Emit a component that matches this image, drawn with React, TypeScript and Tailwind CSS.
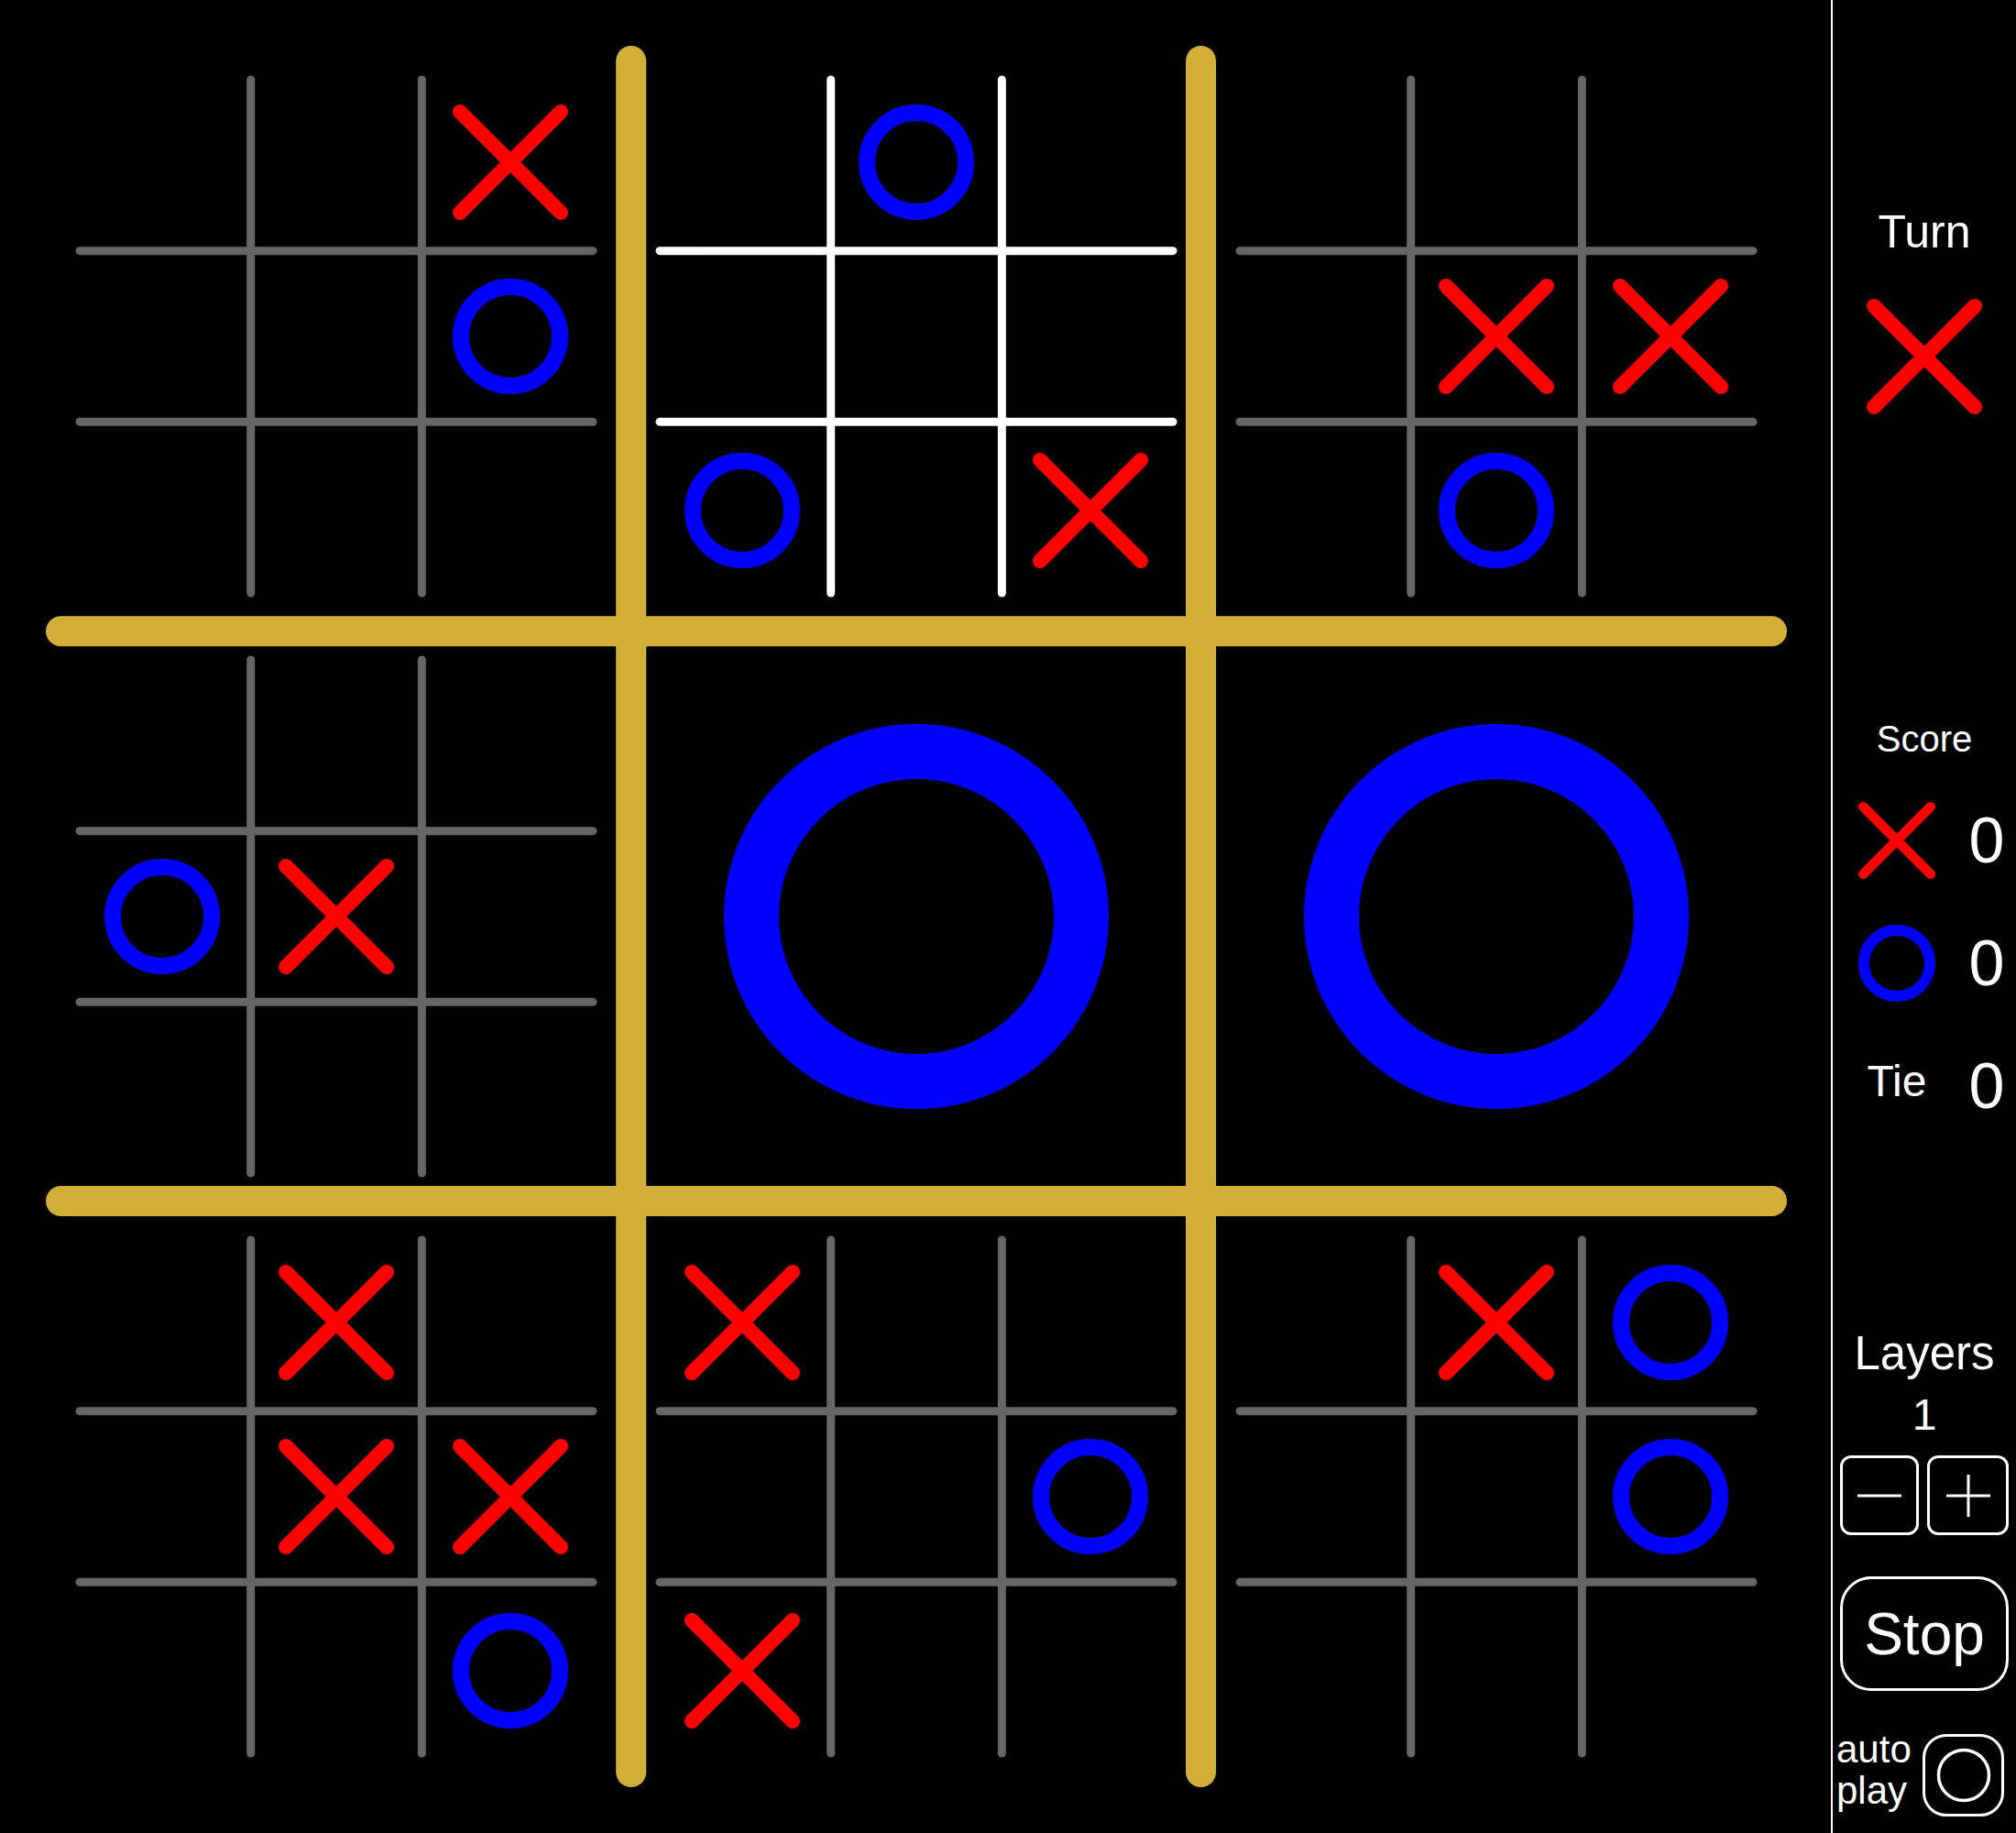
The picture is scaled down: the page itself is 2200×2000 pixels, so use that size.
import React from 'react'

type Cell = 'X' | 'O' | '.'

const CENTERS = [367, 1000, 1633]
const GOLD_LINES = [688.7, 1310.5]
const GOLD = '#d4af37'
const RED = '#ff0000'
const BLUE = '#0000ff'

// each sub board: either 9 cells row by row, or a won board
const boards: { cells?: string; winner?: Cell }[] = [
  { cells: '..X..O...' },
  { cells: '.O....O.X' },
  { cells: '....XX.O.' },
  { cells: '...OX....' },
  { winner: 'O' },
  { winner: 'O' },
  { cells: '.X..XX..O' },
  { cells: 'X....OX..' },
  { cells: '.XO..O...' },
]
const activeBoard = 1

const XMark = ({ x, y, d = 55, w = 16 }: { x: number; y: number; d?: number; w?: number }) => (
  <g stroke={RED} strokeWidth={w} strokeLinecap="round">
    <line x1={x - d} y1={y - d} x2={x + d} y2={y + d} />
    <line x1={x + d} y1={y - d} x2={x - d} y2={y + d} />
  </g>
)

const OMark = ({ x, y, r = 54, w = 18 }: { x: number; y: number; r?: number; w?: number }) => (
  <circle cx={x} cy={y} r={r} fill="none" stroke={BLUE} strokeWidth={w} />
)

const SubBoard = ({ index }: { index: number }) => {
  const cx = CENTERS[index % 3]
  const cy = CENTERS[Math.floor(index / 3)]
  const board = boards[index]

  if (board.winner === 'O') return <OMark x={cx} y={cy} r={180} w={60} />
  if (board.winner === 'X') return <XMark x={cx} y={cy} d={160} w={50} />

  const lineColor = index === activeBoard ? '#ffffff' : '#666666'
  const third = 560 / 3

  return (
    <g>
      <g stroke={lineColor} strokeWidth={9} strokeLinecap="round">
        {[-1, 1].map((s) => (
          <React.Fragment key={s}>
            <line x1={cx + (s * third) / 2} y1={cy - 280} x2={cx + (s * third) / 2} y2={cy + 280} />
            <line x1={cx - 280} y1={cy + (s * third) / 2} x2={cx + 280} y2={cy + (s * third) / 2} />
          </React.Fragment>
        ))}
      </g>
      {board.cells!.split('').map((c, i) => {
        const x = cx + ((i % 3) - 1) * 190
        const y = cy + (Math.floor(i / 3) - 1) * 190
        if (c === 'X') return <XMark key={i} x={x} y={y} />
        if (c === 'O') return <OMark key={i} x={x} y={y} />
        return null
      })}
    </g>
  )
}

const Board = () => (
  <div className="w-[1998px] h-[2000px] shrink-0">
    <svg width="1998" height="2000" className="block">
      {boards.map((_, i) => (
        <SubBoard key={i} index={i} />
      ))}
      <g stroke={GOLD} strokeWidth={33} strokeLinecap="round">
        {GOLD_LINES.map((p) => (
          <React.Fragment key={p}>
            <line x1={p} y1={66.5} x2={p} y2={1933.5} />
            <line x1={66.5} y1={p} x2={1933.5} y2={p} />
          </React.Fragment>
        ))}
      </g>
    </svg>
  </div>
)

const SmallX = ({ size, d, w }: { size: number; d: number; w: number }) => (
  <svg width={size} height={size} className="block">
    <XMark x={size / 2} y={size / 2} d={d} w={w} />
  </svg>
)

const SmallO = ({ size, r, w }: { size: number; r: number; w: number }) => (
  <svg width={size} height={size} className="block">
    <OMark x={size / 2} y={size / 2} r={r} w={w} />
  </svg>
)

const Sidebar = () => (
  <aside className="w-[202px] h-[2000px] shrink-0 border-l-2 border-white flex flex-col items-center text-white font-['Liberation_Sans',Arial,sans-serif]">
    <p className="mt-[228px] text-[50px] leading-none">Turn</p>
    <div className="mt-[46px]">
      <SmallX size={130} d={55} w={16} />
    </div>

    <p className="mt-[332px] text-[40px] leading-none">Score</p>
    <div className="mt-[56px] w-full grid grid-cols-[140px_56px] gap-y-[64px]">
      <div className="h-[70px] flex items-center justify-center">
        <SmallX size={90} d={36.7} w={10.7} />
      </div>
      <div className="h-[70px] flex items-center justify-center text-[70px] leading-none">0</div>
      <div className="h-[70px] flex items-center justify-center">
        <SmallO size={90} r={36} w={12} />
      </div>
      <div className="h-[70px] flex items-center justify-center text-[70px] leading-none">0</div>
      <div className="h-[70px] flex items-center justify-center">
        <span className="text-[48px] leading-none mb-[10px]">Tie</span>
      </div>
      <div className="h-[70px] flex items-center justify-center text-[70px] leading-none">0</div>
    </div>

    <p className="mt-[231px] text-[51px] leading-none">Layers</p>
    <p className="mt-[18px] text-[48px] leading-none">1</p>
    <div className="mt-[20px] flex gap-[9px]">
      <button className="w-[86px] h-[87px] border-[3px] border-white rounded-[12px] flex items-center justify-center">
        <svg width="50" height="48" className="block">
          <line x1="1" y1="24" x2="49" y2="24" stroke="white" strokeWidth="3" />
        </svg>
      </button>
      <button className="w-[89px] h-[87px] border-[3px] border-white rounded-[12px] flex items-center justify-center">
        <svg width="50" height="48" className="block">
          <line x1="1" y1="24" x2="49" y2="24" stroke="white" strokeWidth="3" />
          <line x1="25" y1="1" x2="25" y2="47" stroke="white" strokeWidth="3" />
        </svg>
      </button>
    </div>

    <button className="mt-[45px] w-[184px] h-[125px] border-[3px] border-white rounded-[34px] flex items-center justify-center text-[64px] leading-none">
      Stop
    </button>

    <div className="mt-[47px] w-full flex items-start">
      <div className="w-[98px] -mt-[6px] pl-[4px] text-[42px] leading-[45px]">
        <div>auto</div>
        <div>play</div>
      </div>
      <button className="w-[89px] h-[90px] border-[3px] border-white rounded-[26px] flex items-center justify-center">
        <svg width="64" height="64" className="block">
          <circle cx="32" cy="32" r="27.5" fill="none" stroke="white" strokeWidth="3.5" />
        </svg>
      </button>
    </div>
  </aside>
)

export default function App() {
  return (
    <div className="w-[2200px] h-[2000px] bg-black flex overflow-hidden">
      <Board />
      <Sidebar />
    </div>
  )
}
